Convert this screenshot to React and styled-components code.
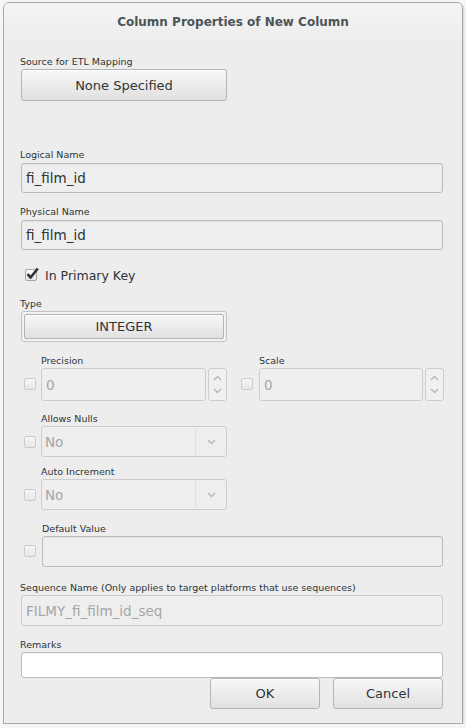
import React from 'react';
import styled, { createGlobalStyle } from 'styled-components';

const GlobalStyle = createGlobalStyle`
  html, body {
    margin: 0;
    padding: 0;
    background: #f6f6f6;
  }
  body {
    font-family: "DejaVu Sans", "Liberation Sans", sans-serif;
    color: #2e3436;
  }
`;

const Dialog = styled.div`
  box-sizing: border-box;
  margin: 2px 0 0 3px;
  width: 460px;
  height: 722px;
  background: #ededed;
  border: 1px solid #a7a7a7;
  border-radius: 6px 6px 0 0;
  box-shadow: 1px 1px 2px rgba(0, 0, 0, 0.15);
  display: flex;
  flex-direction: column;
  overflow: hidden;
`;

const Header = styled.div`
  height: 39px;
  flex: none;
  display: flex;
  align-items: center;
  justify-content: center;
  background: linear-gradient(#f4f4f4, #ededed);
`;

const Title = styled.h1`
  margin: 0 0 1px;
  font-size: 12px;
  font-weight: bold;
  color: #4c5558;
`;

const Body = styled.div`
  flex: 1;
  padding: 14px 19px 0 16px;
  display: flex;
  flex-direction: column;
`;

const Section = styled.div`
  margin-top: ${({ $top }) => $top || 0}px;
  display: flex;
  flex-direction: column;
`;

const Label = styled.div`
  font-size: 9.5px;
  line-height: 12px;
  height: 12px;
  margin-bottom: ${({ $gap }) => ($gap === undefined ? 1 : $gap)}px;
  color: #2e3436;
  white-space: nowrap;
`;

const PushButton = styled.div`
  box-sizing: border-box;
  width: ${({ $width }) => $width}px;
  height: ${({ $height }) => $height || 32}px;
  margin-left: ${({ $left }) => $left || 1}px;
  display: flex;
  align-items: center;
  justify-content: center;
  font-size: 13px;
  color: #2e3436;
  border: 1px solid #b4b4b4;
  border-radius: 3px;
  background: linear-gradient(#f7f7f7, #e1e1e1);
  box-shadow: inset 0 1px 0 #ffffff;
`;

const TypeFrame = styled.div`
  box-sizing: border-box;
  width: 206px;
  height: 31px;
  margin-left: 1px;
  padding: 2px;
  border: 1px solid #c2c2c2;
  border-radius: 3px;
  background: #f2f2f2;
  display: flex;
`;

const TypeButton = styled(PushButton)`
  flex: 1;
  height: auto;
  margin: 0;
  border-radius: 2px;
`;

const TextBox = styled.div`
  box-sizing: border-box;
  flex: ${({ $grow }) => ($grow ? 1 : 'none')};
  height: ${({ $height }) => $height || 30}px;
  margin-left: ${({ $left }) => ($left === undefined ? 1 : $left)}px;
  padding-left: 4px;
  display: flex;
  align-items: center;
  font-size: 13.5px;
  color: ${({ $disabled }) => ($disabled ? '#a4a6a6' : '#2e3436')};
  border: 1px solid ${({ $disabled }) => ($disabled ? '#cdcdcd' : '#bcbcbc')};
  border-radius: 3px;
  background: ${({ $white }) => ($white ? '#ffffff' : '#eeeeee')};
  box-shadow: ${({ $disabled }) => ($disabled ? 'none' : 'inset 0 1px 1px rgba(0,0,0,0.05)')};
`;

const CheckRow = styled.div`
  margin-top: 15px;
  height: 20px;
  display: flex;
  align-items: center;
  padding-left: 5px;
  gap: 8px;
  font-size: 12.5px;
`;

const CheckMark = styled.span`
  position: relative;
  width: 12px;
  height: 12px;
  flex: none;
  box-sizing: border-box;
  border: 1px solid #a8a8a8;
  border-radius: 2px;
  background: linear-gradient(#fbfbfb, #e4e4e4);
  svg {
    position: absolute;
    left: -1px;
    top: -4px;
  }
`;

const OptionRow = styled.div`
  display: grid;
  grid-template-columns: ${({ $cols }) => $cols};
  align-items: end;
`;

const OptionBox = styled.span`
  box-sizing: border-box;
  width: 12px;
  height: 12px;
  margin: 0 0 ${({ $bottom }) => $bottom}px ${({ $left }) => $left || 4}px;
  border: 1px solid #cbcbcb;
  border-radius: 2px;
  background: linear-gradient(#f6f6f6, #e6e6e6);
`;

const Field = styled.div`
  display: flex;
  flex-direction: column;
  min-width: 0;
`;

const Spin = styled.div`
  display: flex;
  gap: 2px;
  height: 33px;
`;

const SpinButtons = styled.div`
  box-sizing: border-box;
  width: 19px;
  flex: none;
  border: 1px solid #cdcdcd;
  border-radius: 3px;
  background: #f0f0f0;
  display: flex;
  flex-direction: column;
  align-items: center;
  justify-content: space-around;
  padding: 3px 0;
`;

const Combo = styled.div`
  box-sizing: border-box;
  width: 186px;
  height: 31px;
  display: flex;
  border: 1px solid #cdcdcd;
  border-radius: 3px;
  background: #eeeeee;
`;

const ComboText = styled.div`
  flex: 1;
  display: flex;
  align-items: center;
  padding-left: 3px;
  font-size: 13.5px;
  color: #a4a6a6;
  border-right: 1px solid #e0e0e0;
`;

const ComboArrow = styled.div`
  width: 30px;
  display: flex;
  align-items: center;
  justify-content: center;
`;

const Footer = styled.div`
  display: flex;
  justify-content: flex-end;
  gap: 12px;
`;

const Chevron = ({ up }) => (
  <svg width="9" height="6" viewBox="0 0 9 6">
    <path
      d={up ? 'M1 5 L4.5 1.5 L8 5' : 'M1 1 L4.5 4.5 L8 1'}
      fill="none"
      stroke="#b4b6b6"
      strokeWidth="1.4"
    />
  </svg>
);

const Tick = () => (
  <svg width="15" height="15" viewBox="0 0 15 15">
    <path
      d="M2.5 8.2 L5.6 11.5 L12.8 2.5"
      fill="none"
      stroke="#2e3436"
      strokeWidth="2.6"
      strokeLinejoin="round"
    />
  </svg>
);

const SpinField = ({ label }) => (
  <Field>
    <Label $gap={1}>{label}</Label>
    <Spin>
      <TextBox $grow $height={33} $disabled $left={0}>
        0
      </TextBox>
      <SpinButtons>
        <Chevron up />
        <Chevron />
      </SpinButtons>
    </Spin>
  </Field>
);

const ComboField = ({ label, top }) => (
  <Section $top={top}>
    <OptionRow $cols="21px 186px">
      <OptionBox $bottom={9} />
      <Field>
        <Label>{label}</Label>
        <Combo>
          <ComboText>No</ComboText>
          <ComboArrow>
            <Chevron />
          </ComboArrow>
        </Combo>
      </Field>
    </OptionRow>
  </Section>
);

const App = () => (
  <>
    <GlobalStyle />
    <Dialog>
      <Header>
        <Title>Column Properties of New Column</Title>
      </Header>
      <Body>
        <Section>
          <Label $gap={1}>Source for ETL Mapping</Label>
          <PushButton $width={206}>None Specified</PushButton>
        </Section>

        <Section $top={48}>
          <Label $gap={2}>Logical Name</Label>
          <TextBox>fi_film_id</TextBox>
        </Section>

        <Section $top={13}>
          <Label $gap={2}>Physical Name</Label>
          <TextBox>fi_film_id</TextBox>
        </Section>

        <CheckRow>
          <CheckMark>
            <Tick />
          </CheckMark>
          In Primary Key
        </CheckRow>

        <Section $top={13}>
          <Label>Type</Label>
          <TypeFrame>
            <TypeButton>INTEGER</TypeButton>
          </TypeFrame>
        </Section>

        <Section $top={13}>
          <OptionRow $cols="21px 186px 32px 185px">
            <OptionBox $bottom={11} />
            <SpinField label="Precision" />
            <OptionBox $bottom={11} $left={14} />
            <SpinField label="Scale" />
          </OptionRow>
        </Section>

        <ComboField label="Allows Nulls" top={12} />
        <ComboField label="Auto Increment" top={9} />

        <Section $top={13}>
          <OptionRow $cols="22px 1fr">
            <OptionBox $bottom={10} />
            <Field>
              <Label>Default Value</Label>
              <TextBox $height={31} $left={0} />
            </Field>
          </OptionRow>
        </Section>

        <Section $top={15}>
          <Label>Sequence Name (Only applies to target platforms that use sequences)</Label>
          <TextBox $height={31} $disabled>
            FILMY_fi_film_id_seq
          </TextBox>
        </Section>

        <Section $top={13}>
          <Label>Remarks</Label>
          <TextBox $height={26} $white />
        </Section>

        <Footer>
          <PushButton $width={110} $height={31} $left={0}>
            OK
          </PushButton>
          <PushButton $width={110} $height={31} $left={0}>
            Cancel
          </PushButton>
        </Footer>
      </Body>
    </Dialog>
  </>
);

export default App;
